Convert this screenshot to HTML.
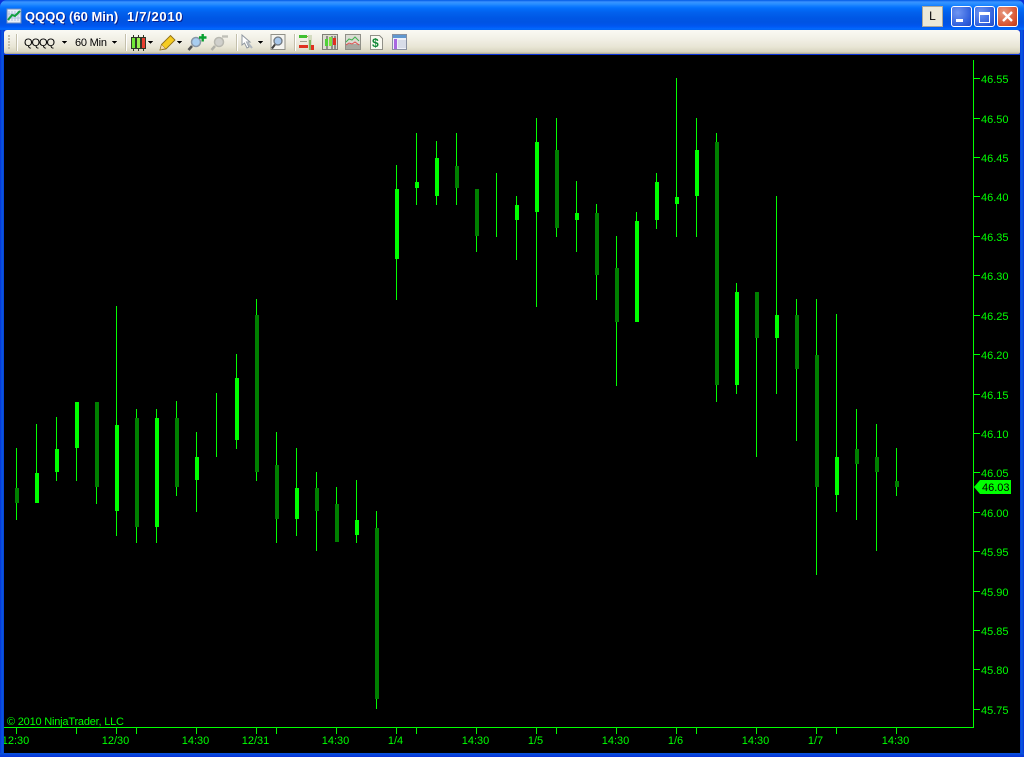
<!DOCTYPE html>
<html>
<head>
<meta charset="utf-8">
<title>QQQQ (60 Min) 1/7/2010</title>
<style>
html,body{margin:0;padding:0;width:1024px;height:757px;overflow:hidden;background:#000}
#w{position:absolute;left:0;top:0;width:1024px;height:757px;overflow:hidden;background:#0831d9}
#tb{position:absolute;left:0;top:0;width:1024px;height:30px;border-radius:7px 7px 0 0;background:linear-gradient(#0058e6 0,#3a93ff 2px,#288eff 4px,#127dff 6px,#036ffc 8px,#0262ee 12px,#0057e5 18px,#0054e3 22px,#0055eb 25px,#005bf5 27px,#026afe 29px,#0062ef 30px)}
#lb{position:absolute;left:0;top:30px;width:4px;height:727px;background:linear-gradient(90deg,#0831d9 0,#0855dd 2px,#0855dd 3px,#0831d9 4px)}
#rb{position:absolute;left:1020px;top:30px;width:4px;height:727px;background:linear-gradient(90deg,#0831d9 0,#0855dd 1px,#0855dd 2px,#0831d9 4px)}
#bb{position:absolute;left:0;top:753px;width:1024px;height:4px;background:linear-gradient(#0855dd 0,#0842d9 2px,#0831d9 4px)}
.t{position:absolute;top:9px;font:bold 13px/16px "Liberation Sans",sans-serif;color:#fff;text-shadow:1px 1px 0 #0a1f8a;white-space:pre}
#bar{position:absolute;left:4px;top:30px;width:1016px;height:24px;border-radius:3px 3px 2px 2px;background:linear-gradient(#fafaf4 0,#f2f0e6 9px,#e8e5d4 17px,#d8d4c0 22px,#a8a48c 24px)}
#chart{position:absolute;left:4px;top:55px;width:1016px;height:698px;background:#000}
.b{position:absolute;top:6px;width:21px;height:21px;border-radius:3px;border:1px solid #fff;box-sizing:border-box}
#L{position:absolute;left:922px;top:6px;width:21px;height:21px;box-sizing:border-box;background:#ece9d8;border:1px solid #aca899;font:12px/19px "Liberation Sans",sans-serif;color:#000;text-align:center}
svg{position:absolute;left:0;top:0}
</style>
</head>
<body>
<div id="w">
<div id="tb"></div>
<div id="lb"></div><div id="rb"></div><div id="bb"></div>
<div id="bar"></div>
<div id="chart"></div>
<div class="t" style="left:25px">QQQQ (60 Min)</div>
<div class="t" style="left:127px;letter-spacing:.7px">1/7/2010</div>
<div id="L">L</div>
<div class="b" style="left:951px;background:radial-gradient(circle at 30% 30%,#6f96f2,#2f5fdc 70%,#2348c0)"></div>
<div class="b" style="left:974px;background:radial-gradient(circle at 30% 30%,#6f96f2,#2f5fdc 70%,#2348c0)"></div>
<div class="b" style="left:997px;background:radial-gradient(circle at 30% 30%,#e89a80,#d8512e 70%,#b83a1a)"></div>

<svg width="1024" height="757" viewBox="0 0 1024 757" shape-rendering="crispEdges" font-family="'Liberation Sans',sans-serif" font-size="11">
<defs><clipPath id="c"><rect x="4" y="728" width="969" height="25"/></clipPath></defs>

<!-- wicks -->
<g fill="#00ff00">
<rect x="16" y="448" width="1" height="72"/><rect x="36" y="424" width="1" height="79"/><rect x="56" y="417" width="1" height="64"/><rect x="76" y="402" width="1" height="79"/><rect x="96" y="402" width="1" height="102"/>
<rect x="116" y="306" width="1" height="230"/><rect x="136" y="409" width="1" height="134"/><rect x="156" y="409" width="1" height="134"/><rect x="176" y="401" width="1" height="95"/><rect x="196" y="432" width="1" height="80"/>
<rect x="216" y="393" width="1" height="64"/><rect x="236" y="354" width="1" height="95"/><rect x="256" y="299" width="1" height="182"/><rect x="276" y="432" width="1" height="111"/><rect x="296" y="448" width="1" height="88"/>
<rect x="316" y="472" width="1" height="79"/><rect x="336" y="487" width="1" height="55"/><rect x="356" y="480" width="1" height="63"/><rect x="376" y="511" width="1" height="198"/><rect x="396" y="165" width="1" height="135"/>
<rect x="416" y="133" width="1" height="72"/><rect x="436" y="141" width="1" height="64"/><rect x="456" y="133" width="1" height="72"/><rect x="476" y="189" width="1" height="63"/><rect x="496" y="173" width="1" height="64"/>
<rect x="516" y="196" width="1" height="64"/><rect x="536" y="118" width="1" height="189"/><rect x="556" y="118" width="1" height="119"/><rect x="576" y="181" width="1" height="71"/><rect x="596" y="204" width="1" height="96"/>
<rect x="616" y="236" width="1" height="150"/><rect x="636" y="212" width="1" height="110"/><rect x="656" y="173" width="1" height="56"/><rect x="676" y="78" width="1" height="159"/><rect x="696" y="118" width="1" height="119"/>
<rect x="716" y="133" width="1" height="269"/><rect x="736" y="283" width="1" height="111"/><rect x="756" y="292" width="1" height="165"/><rect x="776" y="196" width="1" height="198"/><rect x="796" y="299" width="1" height="142"/>
<rect x="816" y="299" width="1" height="276"/><rect x="836" y="314" width="1" height="198"/><rect x="856" y="409" width="1" height="111"/><rect x="876" y="424" width="1" height="127"/><rect x="896" y="448" width="1" height="48"/>
</g>
<!-- bright bodies -->
<g fill="#00ff00">
<rect x="35" y="473" width="4" height="30"/><rect x="55" y="449" width="4" height="23"/><rect x="75" y="402" width="4" height="46"/><rect x="115" y="425" width="4" height="86"/><rect x="155" y="418" width="4" height="109"/>
<rect x="195" y="457" width="4" height="23"/><rect x="235" y="378" width="4" height="62"/><rect x="295" y="488" width="4" height="31"/><rect x="355" y="520" width="4" height="15"/><rect x="395" y="189" width="4" height="70"/>
<rect x="415" y="182" width="4" height="6"/><rect x="435" y="158" width="4" height="38"/><rect x="515" y="205" width="4" height="15"/><rect x="535" y="142" width="4" height="70"/><rect x="575" y="213" width="4" height="7"/>
<rect x="635" y="221" width="4" height="101"/><rect x="655" y="182" width="4" height="38"/><rect x="675" y="197" width="4" height="7"/><rect x="695" y="150" width="4" height="46"/><rect x="735" y="292" width="4" height="93"/>
<rect x="775" y="315" width="4" height="23"/><rect x="835" y="457" width="4" height="38"/>
</g>
<!-- dark bodies -->
<g fill="#008000">
<rect x="15" y="488" width="4" height="15"/><rect x="95" y="402" width="4" height="85"/><rect x="135" y="418" width="4" height="109"/><rect x="175" y="418" width="4" height="69"/><rect x="255" y="315" width="4" height="157"/>
<rect x="275" y="465" width="4" height="54"/><rect x="315" y="488" width="4" height="23"/><rect x="335" y="504" width="4" height="38"/><rect x="375" y="528" width="4" height="171"/><rect x="455" y="166" width="4" height="22"/>
<rect x="475" y="189" width="4" height="47"/><rect x="555" y="150" width="4" height="78"/><rect x="595" y="213" width="4" height="62"/><rect x="615" y="268" width="4" height="54"/><rect x="715" y="142" width="4" height="243"/>
<rect x="755" y="292" width="4" height="46"/><rect x="795" y="315" width="4" height="54"/><rect x="815" y="355" width="4" height="132"/><rect x="855" y="449" width="4" height="15"/><rect x="875" y="457" width="4" height="15"/>
<rect x="895" y="481" width="4" height="6"/>
</g>

<!-- axes -->
<g fill="#00ff00">
<rect x="973" y="60" width="1" height="668"/>
<rect x="4" y="727" width="970" height="1"/>
<rect x="974" y="78" width="6" height="1"/><rect x="974" y="118" width="6" height="1"/><rect x="974" y="157" width="6" height="1"/><rect x="974" y="196" width="6" height="1"/><rect x="974" y="236" width="6" height="1"/><rect x="974" y="275" width="6" height="1"/><rect x="974" y="315" width="6" height="1"/><rect x="974" y="354" width="6" height="1"/><rect x="974" y="394" width="6" height="1"/><rect x="974" y="433" width="6" height="1"/><rect x="974" y="472" width="6" height="1"/><rect x="974" y="512" width="6" height="1"/><rect x="974" y="551" width="6" height="1"/><rect x="974" y="591" width="6" height="1"/><rect x="974" y="630" width="6" height="1"/><rect x="974" y="669" width="6" height="1"/><rect x="974" y="709" width="6" height="1"/>
<rect x="16" y="728" width="1" height="6"/><rect x="76" y="728" width="1" height="6"/><rect x="116" y="728" width="1" height="6"/><rect x="136" y="728" width="1" height="6"/><rect x="196" y="728" width="1" height="6"/><rect x="256" y="728" width="1" height="6"/><rect x="276" y="728" width="1" height="6"/><rect x="336" y="728" width="1" height="6"/><rect x="396" y="728" width="1" height="6"/><rect x="416" y="728" width="1" height="6"/><rect x="476" y="728" width="1" height="6"/><rect x="536" y="728" width="1" height="6"/><rect x="556" y="728" width="1" height="6"/><rect x="616" y="728" width="1" height="6"/><rect x="676" y="728" width="1" height="6"/><rect x="696" y="728" width="1" height="6"/><rect x="756" y="728" width="1" height="6"/><rect x="816" y="728" width="1" height="6"/><rect x="836" y="728" width="1" height="6"/><rect x="896" y="728" width="1" height="6"/>
</g>
<g fill="#00ff00">
<text x="981" y="83">46.55</text><text x="981" y="123">46.50</text><text x="981" y="162">46.45</text><text x="981" y="201">46.40</text><text x="981" y="241">46.35</text><text x="981" y="280">46.30</text><text x="981" y="320">46.25</text><text x="981" y="359">46.20</text><text x="981" y="399">46.15</text><text x="981" y="438">46.10</text><text x="981" y="477">46.05</text><text x="981" y="517">46.00</text><text x="981" y="556">45.95</text><text x="981" y="596">45.90</text><text x="981" y="635">45.85</text><text x="981" y="674">45.80</text><text x="981" y="714">45.75</text>
<g text-anchor="middle" clip-path="url(#c)">
<text x="15.5" y="744">12:30</text><text x="115.5" y="744">12/30</text><text x="195.5" y="744">14:30</text><text x="255.5" y="744">12/31</text><text x="335.5" y="744">14:30</text><text x="395.5" y="744">1/4</text><text x="475.5" y="744">14:30</text><text x="535.5" y="744">1/5</text><text x="615.5" y="744">14:30</text><text x="675.5" y="744">1/6</text><text x="755.5" y="744">14:30</text><text x="815.5" y="744">1/7</text><text x="895.5" y="744">14:30</text>
</g>
<text x="7" y="725" textLength="117" lengthAdjust="spacing">© 2010 NinjaTrader, LLC</text>
</g>
<polygon points="974,487 980,480 1011,480 1011,494 980,494" fill="#00ff00" shape-rendering="auto"/>
<text x="982" y="491" fill="#000">46.03</text>

<!-- title icon -->
<g>
<rect x="7" y="9" width="14" height="14" fill="#e8eef8" stroke="#6a8ac0"/>
<path d="M9 11v10M12 11v10M15 11v10M18 11v10M8 14h12M8 18h12" stroke="#b0c0e0" fill="none"/>
<path d="M8 20l4-5 3 1 5-5" stroke="#10a040" stroke-width="2" fill="none" shape-rendering="auto"/>
</g>

<!-- window buttons -->
<rect x="956" y="19" width="7" height="3" fill="#fff"/>
<path d="M979.500 12.500h10v10h-10z" fill="none" stroke="#fff"/><rect x="979" y="12" width="11" height="3" fill="#fff"/>
<path d="M1003 12l9 9M1012 12l-9 9" stroke="#fff" stroke-width="2.400" fill="none" shape-rendering="auto"/>

<!-- toolbar grip & separators -->
<g fill="#c4c0ac">
<rect x="8" y="35" width="2" height="2"/><rect x="8" y="38" width="2" height="2"/><rect x="8" y="41" width="2" height="2"/><rect x="8" y="44" width="2" height="2"/><rect x="8" y="47" width="2" height="2"/>
<rect x="16" y="34" width="1" height="17"/><rect x="125" y="34" width="1" height="17"/><rect x="236" y="34" width="1" height="17"/><rect x="294" y="34" width="1" height="17"/>
</g>
<g fill="#fff"><rect x="17" y="34" width="1" height="17"/><rect x="126" y="34" width="1" height="17"/><rect x="237" y="34" width="1" height="17"/><rect x="295" y="34" width="1" height="17"/></g>

<text x="24" y="46" fill="#000" textLength="31" lengthAdjust="spacing">QQQQ</text>
<text x="75" y="46" fill="#000" textLength="32" lengthAdjust="spacing">60 Min</text>
<g fill="#000">
<path d="M62 41h5l-2.500 3z"/><path d="M112 41h5l-2.500 3z"/><path d="M148 41h5l-2.500 3z"/><path d="M177 41h5l-2.500 3z"/><path d="M258 41h5l-2.500 3z"/>
</g>

<!-- candle icon -->
<g fill="#303828">
<rect x="133" y="35" width="1" height="16"/><rect x="138" y="35" width="1" height="16"/><rect x="143" y="35" width="1" height="16"/>
<rect x="131" y="37" width="5" height="12"/><rect x="136" y="37" width="5" height="12"/><rect x="141" y="37" width="5" height="12"/>
</g>
<rect x="132" y="38" width="3" height="10" fill="#70e838"/>
<rect x="137" y="38" width="3" height="10" fill="#98f050"/>
<rect x="142" y="38" width="3" height="10" fill="#e84030"/>

<g shape-rendering="auto">
<!-- pencil -->
<path d="M160 50l1.500-5.500 9-9 4.500 4.500-9 9z" fill="#f6cc20" stroke="#907018" stroke-width=".9"/>
<path d="M160 50l1.500-5.500 4 4z" fill="#f0d8b0" stroke="#907018" stroke-width=".5"/>
<!-- zoom plus -->
<circle cx="196" cy="42" r="4.500" fill="#a8cdf0" stroke="#8a98a8" stroke-width="1.500"/>
<path d="M192 46l-3.500 4" stroke="#555" stroke-width="2.500" fill="none"/>
<path d="M199 37.500h7.500M202.700 34v7.500" stroke="#08a030" stroke-width="2.400" fill="none"/>
<!-- zoom gray -->
<circle cx="219" cy="42" r="4.500" fill="#d0d0cc" stroke="#b8b8b0" stroke-width="1.500"/>
<path d="M215 46l-3.500 4" stroke="#b0b0a8" stroke-width="2.500" fill="none"/>
<path d="M222 36.500h6" stroke="#c0c0b8" stroke-width="2.400" fill="none"/>
<!-- cursor -->
<path d="M242 35v10l2.500-2 2.500 5 2-1-2.500-5h3.500z" fill="#fff" stroke="#9098a0" stroke-width="1"/>
<path d="M247 42l5 6" stroke="#b0b8c0" stroke-width="2" fill="none"/>
<!-- zoom box -->
<rect x="271" y="34.500" width="14" height="15" fill="#f4f4f0" stroke="#909088"/>
<circle cx="278" cy="41" r="4" fill="#a8c8ec" stroke="#707880" stroke-width="1.300"/>
<path d="M275 44.500l-3 4" stroke="#404040" stroke-width="2" fill="none"/>
</g>

<!-- bars icon -->
<g>
<rect x="299" y="35" width="8" height="3" fill="#40c030"/>
<rect x="307" y="36" width="2" height="1" fill="#b0a040"/>
<rect x="299" y="45" width="9" height="3" fill="#e03020"/>
<rect x="308" y="35" width="4" height="15" fill="#d4dcc0"/>
<rect x="309" y="40" width="2" height="10" fill="#80b860"/>
<rect x="311" y="45" width="3" height="5" fill="#e03020"/>
<rect x="300" y="41" width="7" height="1" fill="#a0a090"/>
</g>
<!-- candles box -->
<rect x="322.500" y="34.500" width="15" height="15" fill="#dcdcd0" stroke="#808078"/>
<path d="M327 36v13M332 36v13M335 36v13" stroke="#404040" fill="none"/>
<rect x="325" y="39" width="3" height="7" fill="#50d038"/><rect x="329" y="37" width="3" height="9" fill="#80e040"/><rect x="333" y="38" width="3" height="7" fill="#e03020"/>
<!-- chart -->
<rect x="345.500" y="34.500" width="15" height="15" fill="#dcdcd4" stroke="#909088"/>
<rect x="346" y="44" width="14" height="5" fill="#a8a8a0"/>
<g shape-rendering="auto">
<path d="M346 42l3-3 3 1 3-3 4 4" stroke="#40b050" fill="none"/>
<path d="M346 45l3-2 3 1 3-2 4 3" stroke="#e05050" fill="none"/>
</g>
<!-- dollar doc -->
<path d="M370.500 35.500h9l3 3v11h-12z" fill="#f8f8f0" stroke="#909088"/>
<text x="372" y="47" font-size="12" font-weight="bold" fill="#108838">$</text>
<!-- table -->
<rect x="392.500" y="34.500" width="14" height="15" fill="#eef0f8" stroke="#8890a0"/>
<rect x="393" y="35" width="13" height="3" fill="#6098d0"/>
<rect x="394" y="39" width="3" height="10" fill="#a868e0"/>
<path d="M398 41h8M398 43h8M398 45h8M398 47h8" stroke="#c0c8d8" fill="none"/>
</svg>
</div>
</body>
</html>
